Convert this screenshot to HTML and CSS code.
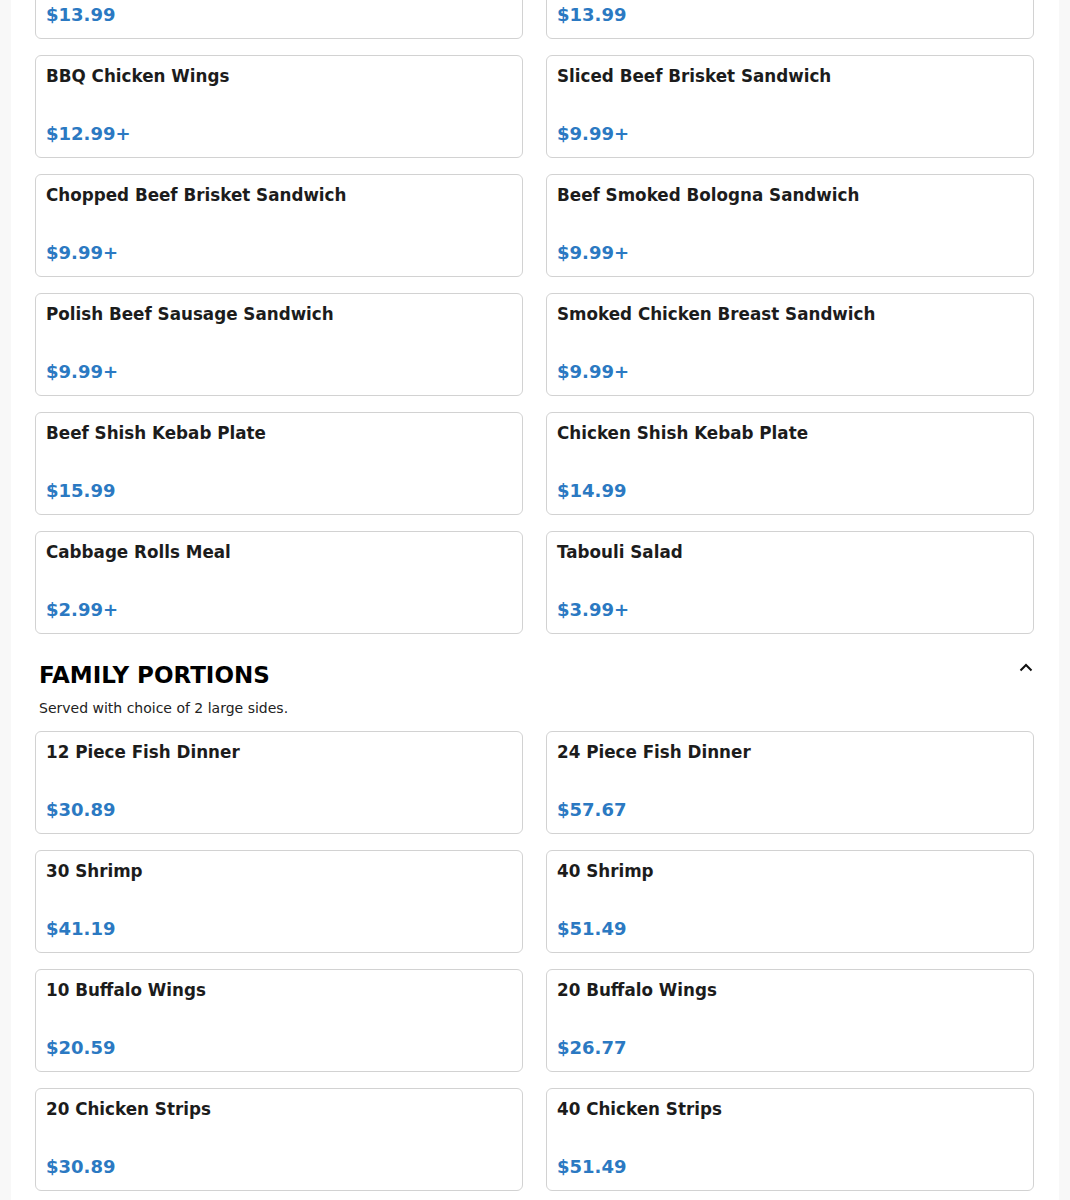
FILE: index.html
```html
<!DOCTYPE html>
<html lang="en">
<head>
<meta charset="utf-8">
<title>Menu</title>
<link rel="stylesheet" href="styles.css">
</head>
<body>
<div class="panel">
  <section class="section first">
    <div class="grid">
      <div class="card"><div class="name">Fish Dinner</div><div class="price">$13.99</div></div>
      <div class="card"><div class="name">Shrimp Dinner</div><div class="price">$13.99</div></div>
      <div class="card"><div class="name">BBQ Chicken Wings</div><div class="price">$12.99+</div></div>
      <div class="card"><div class="name">Sliced Beef Brisket Sandwich</div><div class="price">$9.99+</div></div>
      <div class="card"><div class="name">Chopped Beef Brisket Sandwich</div><div class="price">$9.99+</div></div>
      <div class="card"><div class="name">Beef Smoked Bologna Sandwich</div><div class="price">$9.99+</div></div>
      <div class="card"><div class="name">Polish Beef Sausage Sandwich</div><div class="price">$9.99+</div></div>
      <div class="card"><div class="name">Smoked Chicken Breast Sandwich</div><div class="price">$9.99+</div></div>
      <div class="card"><div class="name">Beef Shish Kebab Plate</div><div class="price">$15.99</div></div>
      <div class="card"><div class="name">Chicken Shish Kebab Plate</div><div class="price">$14.99</div></div>
      <div class="card"><div class="name">Cabbage Rolls Meal</div><div class="price">$2.99+</div></div>
      <div class="card"><div class="name">Tabouli Salad</div><div class="price">$3.99+</div></div>
    </div>
  </section>
  <section class="section">
    <div class="section-head">
      <h2 class="title">FAMILY PORTIONS</h2>
      <svg class="chevron" width="14" height="9" viewBox="0 0 14 9" aria-hidden="true"><path d="M1.5 7.5 L7 2 L12.5 7.5" fill="none" stroke="#111" stroke-width="2"/></svg>
    </div>
    <p class="desc">Served with choice of 2 large sides.</p>
    <div class="grid">
      <div class="card"><div class="name">12 Piece Fish Dinner</div><div class="price">$30.89</div></div>
      <div class="card"><div class="name">24 Piece Fish Dinner</div><div class="price">$57.67</div></div>
      <div class="card"><div class="name">30 Shrimp</div><div class="price">$41.19</div></div>
      <div class="card"><div class="name">40 Shrimp</div><div class="price">$51.49</div></div>
      <div class="card"><div class="name">10 Buffalo Wings</div><div class="price">$20.59</div></div>
      <div class="card"><div class="name">20 Buffalo Wings</div><div class="price">$26.77</div></div>
      <div class="card"><div class="name">20 Chicken Strips</div><div class="price">$30.89</div></div>
      <div class="card"><div class="name">40 Chicken Strips</div><div class="price">$51.49</div></div>
    </div>
  </section>
</div>
</body>
</html>
```

FILE: styles.css
```css
html, body {
  margin: 0;
  padding: 0;
  background: #f8f8f8;
  font-family: "DejaVu Sans", "Noto Sans", sans-serif;
  color: #1c1c1c;
}
.panel {
  margin-left: 11px;
  width: 1048px;
  box-sizing: border-box;
  padding: 0 25px 0 24px;
  background: #ffffff;
  min-height: 1300px;
}
.section.first {
  margin-top: -64px;
}
.grid {
  display: grid;
  grid-template-columns: 1fr 1fr;
  column-gap: 23px;
  row-gap: 16px;
}
.card {
  box-sizing: border-box;
  height: 103px;
  border: 1px solid #d2d2d2;
  border-radius: 6px;
  padding: 10px 10px 13px 10px;
  display: flex;
  flex-direction: column;
  justify-content: space-between;
}
.name {
  font-size: 16.75px;
  font-weight: bold;
  color: #1c1c1c;
}
.price {
  font-size: 18px;
  font-weight: bold;
  color: #2b79c2;
}
.section-head {
  display: flex;
  justify-content: space-between;
  align-items: center;
  padding: 0 0 0 4px;
  margin-top: 28px;
}
.title {
  margin: 0;
  font-size: 23px;
  font-weight: bold;
  color: #000;
}
.chevron {
  margin-right: 1px;
  margin-top: -16px;
}
.desc {
  margin: 12px 0 15px 4px;
  font-size: 14px;
  color: #222;
}
```
